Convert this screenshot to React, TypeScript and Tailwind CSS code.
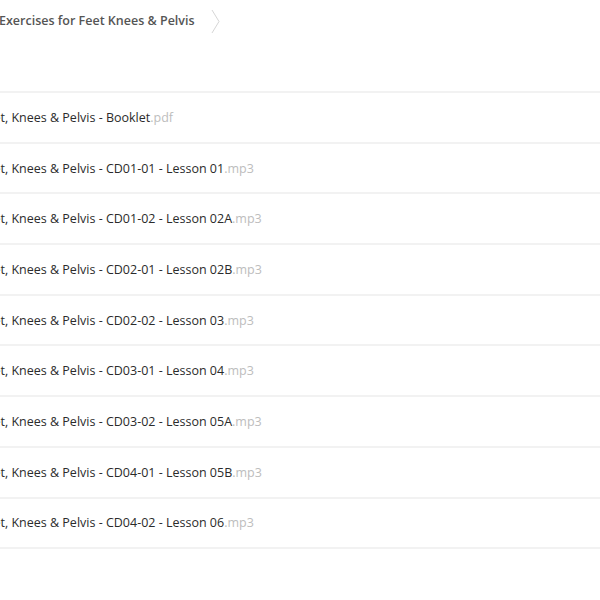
import React from "react";

const files: { name: string; ext: string }[] = [
  { name: "Feet, Knees & Pelvis - Booklet", ext: ".pdf" },
  { name: "Feet, Knees & Pelvis - CD01-01 - Lesson 01", ext: ".mp3" },
  { name: "Feet, Knees & Pelvis - CD01-02 - Lesson 02A", ext: ".mp3" },
  { name: "Feet, Knees & Pelvis - CD02-01 - Lesson 02B", ext: ".mp3" },
  { name: "Feet, Knees & Pelvis - CD02-02 - Lesson 03", ext: ".mp3" },
  { name: "Feet, Knees & Pelvis - CD03-01 - Lesson 04", ext: ".mp3" },
  { name: "Feet, Knees & Pelvis - CD03-02 - Lesson 05A", ext: ".mp3" },
  { name: "Feet, Knees & Pelvis - CD04-01 - Lesson 05B", ext: ".mp3" },
  { name: "Feet, Knees & Pelvis - CD04-02 - Lesson 06", ext: ".mp3" },
];

export default function App() {
  return (
    <div className="w-[600px] h-[600px] overflow-hidden bg-white font-['Open_Sans',sans-serif]">
      {/* breadcrumb */}
      <div className="flex items-center h-[42px]">
        <span className="ml-[-1px] text-[12.5px] font-semibold text-[#555] whitespace-nowrap">
          Exercises for Feet Knees &amp; Pelvis
        </span>
        <svg className="ml-[16px]" width="10" height="25" viewBox="0 0 10 25">
          <path d="M1 1 L8 12.5 L1 24" fill="none" stroke="#d6d6d6" strokeWidth="1" />
        </svg>
      </div>

      <div className="h-[49px]" />

      {/* file list */}
      <div className="border-t-2 border-[#f2f2f2]">
        {files.map((f) => (
          <div
            key={f.name}
            className="h-[50.7px] pt-[2px] flex items-center border-b-2 border-[#f2f2f2] whitespace-nowrap"
          >
            <span className="ml-[-20px] text-[12.5px] text-[#2b2b2b]">
              {f.name}
              <span className="text-[#bdbdbd]">{f.ext}</span>
            </span>
          </div>
        ))}
      </div>
    </div>
  );
}
